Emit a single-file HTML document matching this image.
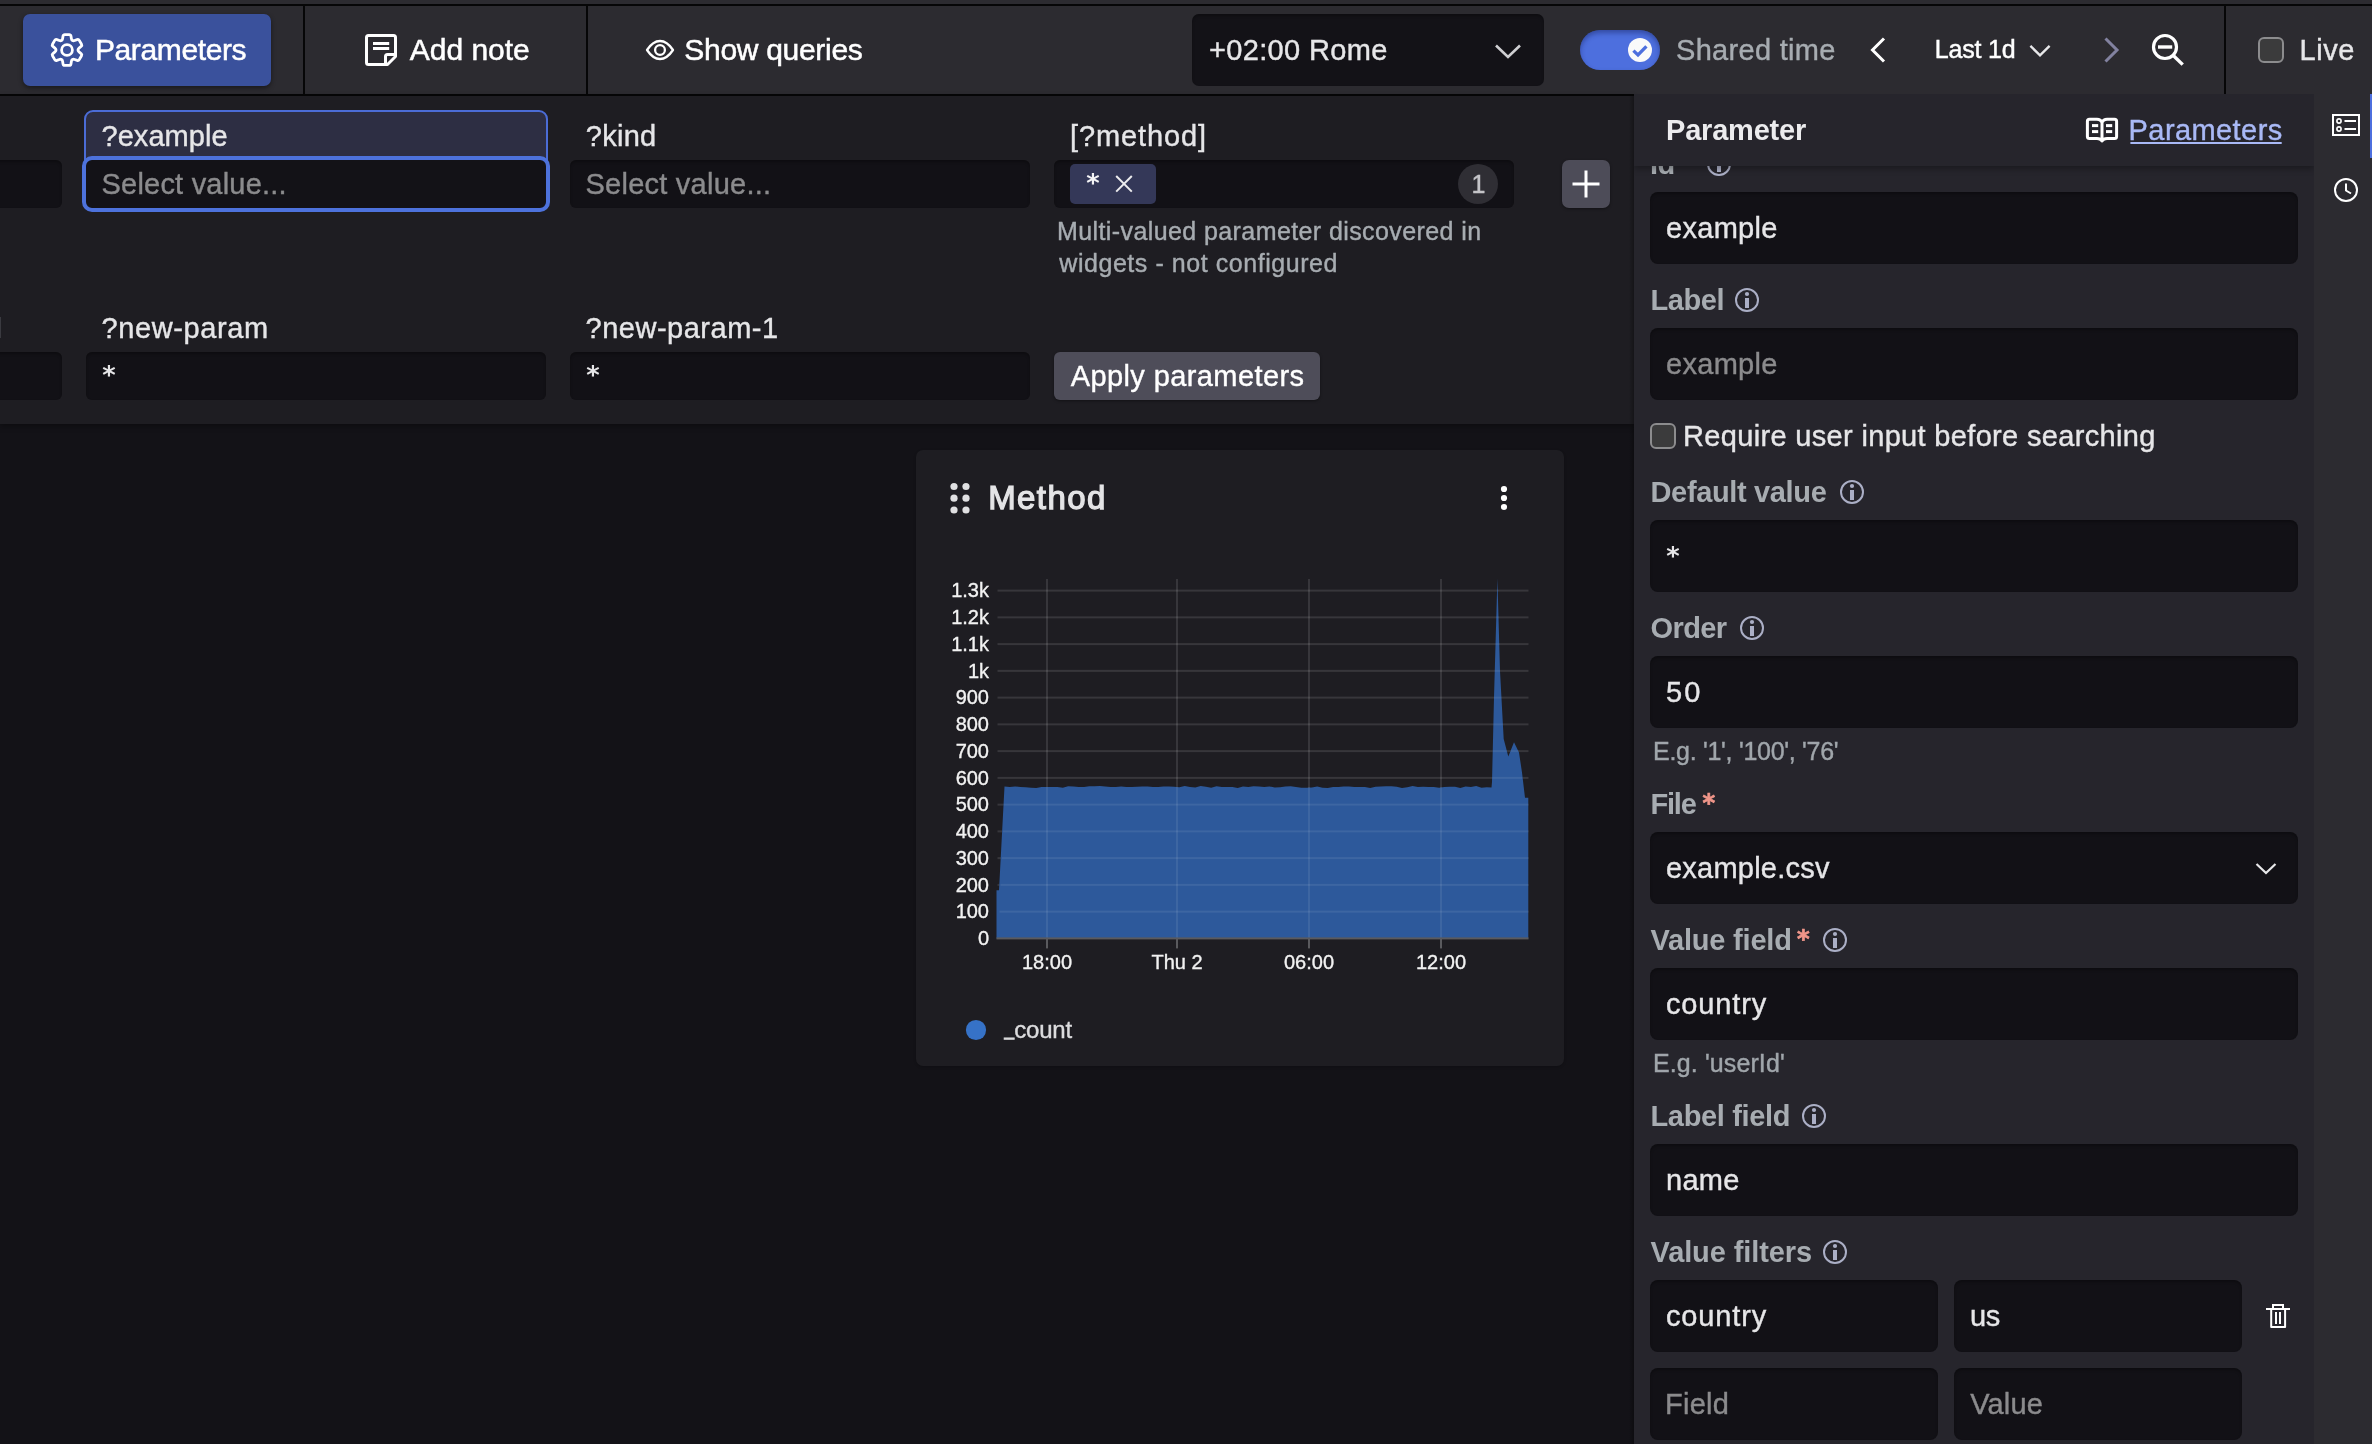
<!DOCTYPE html>
<html><head><meta charset="utf-8"><title>Dashboard</title>
<style>
html,body{margin:0;padding:0}
body{width:2372px;height:1444px;background:#131217;position:relative;overflow:hidden;font-family:"Liberation Sans", sans-serif;}
.b{position:absolute}
.t{position:absolute;white-space:pre;}
.tx{position:absolute;left:0;top:0;width:2372px;height:1444px;will-change:transform;}
svg.ov{position:absolute;left:0;top:0;will-change:transform}
.ax{font-family:"Liberation Sans", sans-serif;font-size:20px;fill:#f2f2f2;stroke:#f2f2f2;stroke-width:0.35px}
.hdr{position:absolute;left:1634px;top:94px;width:680px;height:72px;background:#26252c;box-shadow:0 3px 6px rgba(0,0,0,.3);clip-path:inset(0 0 -12px 0)}
</style></head><body>
<div class="b" style="left:0px;top:0px;width:2372px;height:6px;background:#2c2b30;border-radius:0px;"></div>
<div class="b" style="left:0px;top:4px;width:2372px;height:2px;background:#060607;border-radius:0px;"></div>
<div class="b" style="left:0px;top:6px;width:2372px;height:88px;background:#2c2b30;border-radius:0px;"></div>
<div class="b" style="left:0px;top:94px;width:1634px;height:2px;background:#060607;border-radius:0px;"></div>
<div class="b" style="left:0px;top:96px;width:1634px;height:328px;background:#1e1d22;border-radius:0px;box-shadow:0 2px 6px rgba(0,0,0,.35);"></div>
<div class="b" style="left:303px;top:6px;width:2px;height:88px;background:#060607;border-radius:0px;"></div>
<div class="b" style="left:586px;top:6px;width:2px;height:88px;background:#060607;border-radius:0px;"></div>
<div class="b" style="left:2224px;top:6px;width:2px;height:88px;background:#060607;border-radius:0px;"></div>
<div class="b" style="left:23px;top:14px;width:248px;height:72px;background:#3a519c;border-radius:7px;box-shadow:0 2px 5px rgba(0,0,0,.45);"></div>
<div class="b" style="left:1192px;top:14px;width:352px;height:72px;background:#131217;border-radius:7px;box-shadow:inset 0 2px 3px rgba(0,0,0,.28);"></div>
<div class="b" style="left:1580px;top:30px;width:80px;height:40px;background:#4d6fde;border-radius:20px;box-shadow:inset 0 3px 5px rgba(20,30,90,.45);"></div>
<div class="b" style="left:1628px;top:38px;width:24px;height:24px;background:#fafafa;border-radius:12px;"></div>
<div class="b" style="left:2258px;top:37px;width:26px;height:26px;background:#3b3b3c;border-radius:6px;box-sizing:border-box;border:2px solid #8c8c8e;"></div>
<div class="b" style="left:-10px;top:160px;width:72px;height:48px;background:#121116;border-radius:6px;box-shadow:inset 0 2px 3px rgba(0,0,0,.28);"></div>
<div class="b" style="left:84px;top:110px;width:464px;height:52px;background:#2d2e43;border-radius:9px;box-sizing:border-box;border:2px solid #4b6cd6;border-bottom-left-radius:0;border-bottom-right-radius:0;"></div>
<div class="b" style="left:82px;top:156px;width:468px;height:56px;background:#131217;border-radius:10px;box-sizing:border-box;border:4px solid #4d72dc;"></div>
<div class="b" style="left:570px;top:160px;width:460px;height:48px;background:#121116;border-radius:6px;box-shadow:inset 0 2px 3px rgba(0,0,0,.28);"></div>
<div class="b" style="left:1054px;top:160px;width:460px;height:48px;background:#121116;border-radius:6px;box-shadow:inset 0 2px 3px rgba(0,0,0,.28);"></div>
<div class="b" style="left:1070px;top:164px;width:86px;height:40px;background:#343858;border-radius:5px;"></div>
<div class="b" style="left:1458px;top:164px;width:40px;height:40px;background:#2f2e34;border-radius:20px;"></div>
<div class="b" style="left:1562px;top:160px;width:48px;height:48px;background:#4d4c58;border-radius:7px;box-shadow:0 1px 3px rgba(0,0,0,.4);"></div>
<div class="b" style="left:-10px;top:352px;width:72px;height:48px;background:#121116;border-radius:6px;box-shadow:inset 0 2px 3px rgba(0,0,0,.28);"></div>
<div class="b" style="left:86px;top:352px;width:460px;height:48px;background:#121116;border-radius:6px;box-shadow:inset 0 2px 3px rgba(0,0,0,.28);"></div>
<div class="b" style="left:570px;top:352px;width:460px;height:48px;background:#121116;border-radius:6px;box-shadow:inset 0 2px 3px rgba(0,0,0,.28);"></div>
<div class="b" style="left:1054px;top:352px;width:266px;height:48px;background:#4e4d59;border-radius:6px;box-shadow:0 1px 3px rgba(0,0,0,.4);"></div>
<div class="b" style="left:0px;top:317px;width:1px;height:21px;background:#3a3a40;border-radius:0px;"></div>
<div class="b" style="left:916px;top:450px;width:648px;height:616px;background:#1e1d22;border-radius:7px;box-shadow:0 1px 3px rgba(0,0,0,.2);"></div>
<div class="b" style="left:1629px;top:96px;width:5px;height:1348px;background:linear-gradient(to right,rgba(0,0,0,0),rgba(0,0,0,.3));border-radius:0px;"></div>
<div class="b" style="left:1634px;top:94px;width:680px;height:1350px;background:#26252c;border-radius:0px;"></div>
<div class="b" style="left:2314px;top:94px;width:58px;height:1350px;background:#2c2b30;border-radius:0px;"></div>
<div class="b" style="left:2370px;top:94px;width:2px;height:64px;background:#4d6fde;border-radius:0px;"></div>
<div class="b" style="left:1650px;top:192px;width:648px;height:72px;background:#121116;border-radius:8px;box-shadow:inset 0 2px 3px rgba(0,0,0,.28);"></div>
<div class="b" style="left:1650px;top:328px;width:648px;height:72px;background:#121116;border-radius:8px;box-shadow:inset 0 2px 3px rgba(0,0,0,.28);"></div>
<div class="b" style="left:1650px;top:520px;width:648px;height:72px;background:#121116;border-radius:8px;box-shadow:inset 0 2px 3px rgba(0,0,0,.28);"></div>
<div class="b" style="left:1650px;top:656px;width:648px;height:72px;background:#121116;border-radius:8px;box-shadow:inset 0 2px 3px rgba(0,0,0,.28);"></div>
<div class="b" style="left:1650px;top:832px;width:648px;height:72px;background:#121116;border-radius:8px;box-shadow:inset 0 2px 3px rgba(0,0,0,.28);"></div>
<div class="b" style="left:1650px;top:968px;width:648px;height:72px;background:#121116;border-radius:8px;box-shadow:inset 0 2px 3px rgba(0,0,0,.28);"></div>
<div class="b" style="left:1650px;top:1144px;width:648px;height:72px;background:#121116;border-radius:8px;box-shadow:inset 0 2px 3px rgba(0,0,0,.28);"></div>
<div class="b" style="left:1650px;top:1280px;width:288px;height:72px;background:#121116;border-radius:8px;box-shadow:inset 0 2px 3px rgba(0,0,0,.28);"></div>
<div class="b" style="left:1954px;top:1280px;width:288px;height:72px;background:#121116;border-radius:8px;box-shadow:inset 0 2px 3px rgba(0,0,0,.28);"></div>
<div class="b" style="left:1650px;top:1368px;width:288px;height:72px;background:#121116;border-radius:8px;box-shadow:inset 0 2px 3px rgba(0,0,0,.28);"></div>
<div class="b" style="left:1954px;top:1368px;width:288px;height:72px;background:#121116;border-radius:8px;box-shadow:inset 0 2px 3px rgba(0,0,0,.28);"></div>
<div class="b" style="left:1650px;top:423px;width:26px;height:26px;background:#3b3b3c;border-radius:6px;box-sizing:border-box;border:2px solid #8c8c8e;"></div>
<span class="t" style="left:1650.3px;top:150px;font-size:29px;line-height:29px;font-weight:700;color:#a7acb1;letter-spacing:-0.6px;will-change:transform">Id</span>
<svg class="ov" width="2372" height="1444" viewBox="0 0 2372 1444"><g><circle cx="1719" cy="164" r="11" fill="none" stroke="#abafc6" stroke-width="2"/><circle cx="1719" cy="158" r="2.1" fill="#abafc6"/><rect x="1717" y="162" width="4" height="10" fill="#abafc6"/></g></svg>
<div class="hdr"></div>
<svg class="ov" width="2372" height="1444" viewBox="0 0 2372 1444">
<path d="M61.52,40.51 Q62.35,40.03 62.59,38.65 L63.04,36.02 Q63.29,34.54 64.79,34.54 L69.21,34.54 Q70.71,34.54 70.96,36.02 L71.41,38.65 Q71.65,40.03 72.48,40.51 L72.48,40.51 Q73.31,40.99 74.62,40.50 L77.13,39.58 Q78.53,39.06 79.28,40.35 L81.50,44.19 Q82.25,45.48 81.09,46.44 L79.04,48.15 Q77.96,49.04 77.96,50.00 L77.96,50.00 Q77.96,50.96 79.04,51.85 L81.09,53.56 Q82.25,54.52 81.50,55.81 L79.28,59.65 Q78.53,60.94 77.13,60.42 L74.62,59.50 Q73.31,59.01 72.48,59.49 L72.48,59.49 Q71.65,59.97 71.41,61.35 L70.96,63.98 Q70.71,65.46 69.21,65.46 L64.79,65.46 Q63.29,65.46 63.04,63.98 L62.59,61.35 Q62.35,59.97 61.52,59.49 L61.52,59.49 Q60.69,59.01 59.38,59.50 L56.87,60.42 Q55.47,60.94 54.72,59.65 L52.50,55.81 Q51.75,54.52 52.91,53.56 L54.96,51.85 Q56.04,50.96 56.04,50.00 L56.04,50.00 Q56.04,49.04 54.96,48.15 L52.91,46.44 Q51.75,45.48 52.50,44.19 L54.72,40.35 Q55.47,39.06 56.87,39.58 L59.38,40.50 Q60.69,40.99 61.52,40.51Z" fill="none" stroke="#ffffff" stroke-width="2.8" stroke-linejoin="round"/>
<circle cx="67" cy="50" r="5.4" fill="none" stroke="#ffffff" stroke-width="2.8"/>
<path d="M368.5,35.5 H393.5 Q395.5,35.5 395.5,37.5 V56.5 L387.5,64.5 H368.5 Q366.5,64.5 366.5,62.5 V37.5 Q366.5,35.5 368.5,35.5 Z M385.5,64.5 V56.5 Q385.5,54.5 387.5,54.5 H395.5" fill="none" stroke="#ffffff" stroke-width="3" stroke-linejoin="round"/>
<rect x="373" y="42" width="16.2" height="3" fill="#ffffff"/><rect x="373" y="47" width="16.2" height="3" fill="#ffffff"/>
<path d="M647,50 C651,44 655,41 660,41 C665,41 669,44 673,50 C669,56 665,59 660,59 C655,59 651,56 647,50 Z" fill="none" stroke="#ffffff" stroke-width="2.3" stroke-linejoin="round"/>
<circle cx="660" cy="50" r="4.9" fill="none" stroke="#ffffff" stroke-width="2.3"/>
<path d="M1496,45.5 L1508,57 L1520,45.5" fill="none" stroke="#cfcfd2" stroke-width="2.6"/>
<path d="M1633.4,50.6 L1638,55 L1646.4,46.4" fill="none" stroke="#4d6fde" stroke-width="3.3"/>
<path d="M1884,38.5 L1872.5,50 L1884,61.5" fill="none" stroke="#ffffff" stroke-width="3"/>
<path d="M2030.4,45.9 L2040,55.3 L2049.6,45.9" fill="none" stroke="#e8e8ea" stroke-width="2.4"/>
<path d="M2105.5,38.5 L2117,50 L2105.5,61.5" fill="none" stroke="#8282a0" stroke-width="3"/>
<circle cx="2165" cy="47" r="11.5" fill="none" stroke="#ffffff" stroke-width="3.2"/><rect x="2158" y="45.3" width="14.2" height="3.4" fill="#ffffff"/><path d="M2173.3,55.5 L2182.7,64.6" stroke="#ffffff" stroke-width="3.4" fill="none"/>
<path d="M1116.2,176 L1131.8,191.6 M1131.8,176 L1116.2,191.6" stroke="#ececee" stroke-width="2" fill="none"/>
<path d="M1586,170.5 V197.5 M1572.5,184 H1599.5" stroke="#ffffff" stroke-width="3" fill="none"/>
<circle cx="954" cy="486.5" r="3.6" fill="#e0e0e2"/>
<circle cx="954" cy="498.2" r="3.6" fill="#e0e0e2"/>
<circle cx="954" cy="510" r="3.6" fill="#e0e0e2"/>
<circle cx="966" cy="486.5" r="3.6" fill="#e0e0e2"/>
<circle cx="966" cy="498.2" r="3.6" fill="#e0e0e2"/>
<circle cx="966" cy="510" r="3.6" fill="#e0e0e2"/>
<circle cx="1504" cy="489" r="3.1" fill="#ffffff"/>
<circle cx="1504" cy="498" r="3.1" fill="#ffffff"/>
<circle cx="1504" cy="507" r="3.1" fill="#ffffff"/>
<path d="M2102,122.5 Q2100.5,119.2 2097,119.2 H2089.5 Q2087.4,119.2 2087.4,121.2 V136.5 Q2087.4,138.5 2089.5,138.5 H2097 Q2100.5,138.5 2102,141 Q2103.5,138.5 2107,138.5 H2114.5 Q2116.6,138.5 2116.6,136.5 V121.2 Q2116.6,119.2 2114.5,119.2 H2107 Q2103.5,119.2 2102,122.5 V140.5" fill="none" stroke="#ffffff" stroke-width="3" stroke-linejoin="round"/>
<rect x="2092" y="124.1" width="6.2" height="3" fill="#ffffff"/>
<rect x="2092" y="130.1" width="6.2" height="3" fill="#ffffff"/>
<rect x="2106" y="124.1" width="6.2" height="3" fill="#ffffff"/>
<rect x="2106" y="130.1" width="6.2" height="3" fill="#ffffff"/>
<rect x="2130.4" y="142" width="151.3" height="2" fill="#a9b9f6"/>
<rect x="2333" y="115" width="26" height="20" fill="none" stroke="#ffffff" stroke-width="2"/>
<circle cx="2339" cy="121" r="2.1" fill="none" stroke="#ffffff" stroke-width="1.6"/><rect x="2344.5" y="120" width="11.5" height="2" fill="#ffffff"/>
<circle cx="2339" cy="129" r="2.1" fill="none" stroke="#ffffff" stroke-width="1.6"/><rect x="2344.5" y="128" width="11.5" height="2" fill="#ffffff"/>
<circle cx="2346" cy="190" r="11" fill="none" stroke="#ffffff" stroke-width="2"/><path d="M2346,183.5 V190.5 L2351,193.5" fill="none" stroke="#ffffff" stroke-width="2"/>
<g><circle cx="1747" cy="300" r="11" fill="none" stroke="#abafc6" stroke-width="2"/><circle cx="1747" cy="294" r="2.1" fill="#abafc6"/><rect x="1745" y="298" width="4" height="10" fill="#abafc6"/></g>
<g><circle cx="1852" cy="492" r="11" fill="none" stroke="#abafc6" stroke-width="2"/><circle cx="1852" cy="486" r="2.1" fill="#abafc6"/><rect x="1850" y="490" width="4" height="10" fill="#abafc6"/></g>
<g><circle cx="1752" cy="628" r="11" fill="none" stroke="#abafc6" stroke-width="2"/><circle cx="1752" cy="622" r="2.1" fill="#abafc6"/><rect x="1750" y="626" width="4" height="10" fill="#abafc6"/></g>
<g><circle cx="1835" cy="940" r="11" fill="none" stroke="#abafc6" stroke-width="2"/><circle cx="1835" cy="934" r="2.1" fill="#abafc6"/><rect x="1833" y="938" width="4" height="10" fill="#abafc6"/></g>
<g><circle cx="1814" cy="1116" r="11" fill="none" stroke="#abafc6" stroke-width="2"/><circle cx="1814" cy="1110" r="2.1" fill="#abafc6"/><rect x="1812" y="1114" width="4" height="10" fill="#abafc6"/></g>
<g><circle cx="1835" cy="1252" r="11" fill="none" stroke="#abafc6" stroke-width="2"/><circle cx="1835" cy="1246" r="2.1" fill="#abafc6"/><rect x="1833" y="1250" width="4" height="10" fill="#abafc6"/></g>
<path d="M2256.5,864 L2266,873 L2275.5,864" fill="none" stroke="#e8e8ea" stroke-width="2.2"/>
<rect x="2266" y="1308" width="24" height="2" fill="#ffffff"/><path d="M2273,1308 V1305 H2283 V1308" fill="none" stroke="#ffffff" stroke-width="2"/><path d="M2271.2,1310 V1327 H2285.1 V1310" fill="none" stroke="#ffffff" stroke-width="2" stroke-linejoin="round"/><rect x="2275" y="1312" width="2" height="12" fill="#ffffff"/><rect x="2279" y="1312" width="2" height="12" fill="#ffffff"/>
<rect x="997.5" y="910.65" width="531.0" height="2" fill="rgba(255,255,255,0.115)"/><rect x="997.5" y="883.89" width="531.0" height="2" fill="rgba(255,255,255,0.115)"/><rect x="997.5" y="857.14" width="531.0" height="2" fill="rgba(255,255,255,0.115)"/><rect x="997.5" y="830.38" width="531.0" height="2" fill="rgba(255,255,255,0.115)"/><rect x="997.5" y="803.63" width="531.0" height="2" fill="rgba(255,255,255,0.115)"/><rect x="997.5" y="776.88" width="531.0" height="2" fill="rgba(255,255,255,0.115)"/><rect x="997.5" y="750.12" width="531.0" height="2" fill="rgba(255,255,255,0.115)"/><rect x="997.5" y="723.37" width="531.0" height="2" fill="rgba(255,255,255,0.115)"/><rect x="997.5" y="696.61" width="531.0" height="2" fill="rgba(255,255,255,0.115)"/><rect x="997.5" y="669.86" width="531.0" height="2" fill="rgba(255,255,255,0.115)"/><rect x="997.5" y="643.11" width="531.0" height="2" fill="rgba(255,255,255,0.115)"/><rect x="997.5" y="616.35" width="531.0" height="2" fill="rgba(255,255,255,0.115)"/><rect x="997.5" y="589.60" width="531.0" height="2" fill="rgba(255,255,255,0.115)"/><rect x="1046" y="579" width="2" height="359.4" fill="rgba(255,255,255,0.115)"/><rect x="1176" y="579" width="2" height="359.4" fill="rgba(255,255,255,0.115)"/><rect x="1308" y="579" width="2" height="359.4" fill="rgba(255,255,255,0.115)"/><rect x="1440" y="579" width="2" height="359.4" fill="rgba(255,255,255,0.115)"/>
<path d="M996.5,890.2 L999.0,890.2 L1004.5,786.4 L1009.8,787.0 L1015.1,786.4 L1020.4,787.0 L1025.7,787.2 L1031.0,787.8 L1036.3,788.0 L1041.6,787.0 L1046.9,787.0 L1052.2,787.0 L1057.5,787.0 L1062.8,787.8 L1068.1,786.2 L1073.4,786.4 L1078.7,787.0 L1084.0,787.0 L1089.3,786.2 L1094.6,786.2 L1099.9,785.9 L1105.2,786.4 L1110.5,787.0 L1115.8,787.0 L1121.1,786.4 L1126.4,787.0 L1131.7,787.0 L1137.0,786.7 L1142.3,786.4 L1147.6,786.4 L1152.9,787.0 L1158.2,787.0 L1163.5,786.4 L1168.8,786.4 L1174.1,786.7 L1179.4,787.2 L1184.7,785.9 L1190.0,787.0 L1195.3,787.5 L1200.6,785.9 L1205.9,786.7 L1211.2,787.8 L1216.5,786.2 L1221.8,787.0 L1227.1,787.0 L1232.4,787.0 L1237.7,788.0 L1243.0,786.4 L1248.3,787.0 L1253.6,786.2 L1258.9,786.4 L1264.2,787.0 L1269.5,786.4 L1274.8,787.5 L1280.1,787.2 L1285.4,786.4 L1290.7,786.2 L1296.0,787.0 L1301.3,787.8 L1306.6,787.8 L1311.9,787.5 L1317.2,786.4 L1322.5,787.8 L1327.8,788.0 L1333.1,787.0 L1338.4,787.0 L1343.7,786.4 L1349.0,786.4 L1354.3,787.0 L1359.6,787.0 L1364.9,787.0 L1370.2,788.0 L1375.5,786.7 L1380.8,786.4 L1386.1,786.2 L1391.4,786.2 L1396.7,786.7 L1402.0,788.0 L1407.3,787.2 L1412.6,785.9 L1417.9,787.0 L1423.2,786.7 L1428.5,787.0 L1433.8,787.0 L1439.1,787.8 L1444.4,787.0 L1449.7,786.7 L1455.0,786.7 L1460.3,788.0 L1465.6,786.4 L1470.9,787.0 L1476.2,785.9 L1481.5,787.8 L1486.8,787.2 L1491.5,787.5 L1492.0,781.9 L1494.0,697.6 L1497.4,578.6 L1500.0,670.9 L1503.7,739.1 L1508.3,756.5 L1514.0,742.3 L1519.0,752.5 L1522.0,772.5 L1525.0,797.7 L1528.3,797.7 L1528.3,938.4 L996.5,938.4Z" fill="#2d599b"/>
<rect x="999.5" y="910.65" width="528.8" height="2" fill="rgba(255,255,255,0.08)"/>
<rect x="1000.5" y="883.89" width="527.8" height="2" fill="rgba(255,255,255,0.08)"/>
<rect x="1001.8" y="857.14" width="526.5" height="2" fill="rgba(255,255,255,0.08)"/>
<rect x="1002.8" y="830.38" width="525.5" height="2" fill="rgba(255,255,255,0.08)"/>
<rect x="1003.8" y="803.63" width="524.5" height="2" fill="rgba(255,255,255,0.08)"/>
<rect x="1492.2" y="776.88" width="30.1" height="2" fill="rgba(255,255,255,0.08)"/>
<rect x="1493.4" y="723.37" width="9.5" height="2" fill="rgba(255,255,255,0.08)"/>
<rect x="1494" y="696.61" width="7.5" height="2" fill="rgba(255,255,255,0.08)"/>
<rect x="1494.8" y="669.86" width="5.2" height="2" fill="rgba(255,255,255,0.08)"/>
<rect x="1495.5" y="643.11" width="3.9" height="2" fill="rgba(255,255,255,0.08)"/>
<rect x="1496.3" y="616.35" width="2.5" height="2" fill="rgba(255,255,255,0.08)"/>
<rect x="1497.1" y="589.60" width="1.2" height="2" fill="rgba(255,255,255,0.08)"/>
<rect x="1493" y="750.12" width="13.8" height="2" fill="rgba(255,255,255,0.08)"/>
<rect x="1511" y="750.12" width="7.4" height="2" fill="rgba(255,255,255,0.08)"/>
<rect x="1046" y="787.0" width="2" height="151.4" fill="rgba(255,255,255,0.08)"/>
<rect x="1176" y="787.0" width="2" height="151.4" fill="rgba(255,255,255,0.08)"/>
<rect x="1308" y="787.0" width="2" height="151.4" fill="rgba(255,255,255,0.08)"/>
<rect x="1440" y="787.0" width="2" height="151.4" fill="rgba(255,255,255,0.08)"/>
<rect x="996.5" y="937.4" width="532.0" height="2" fill="#5a5a5e"/>
<rect x="1046" y="938.4" width="2" height="10" fill="#5a5a5e"/>
<rect x="1176" y="938.4" width="2" height="10" fill="#5a5a5e"/>
<rect x="1308" y="938.4" width="2" height="10" fill="#5a5a5e"/>
<rect x="1440" y="938.4" width="2" height="10" fill="#5a5a5e"/>
<text x="989" y="945.0" text-anchor="end" class="ax">0</text>
<text x="989" y="918.2" text-anchor="end" class="ax">100</text>
<text x="989" y="891.5" text-anchor="end" class="ax">200</text>
<text x="989" y="864.7" text-anchor="end" class="ax">300</text>
<text x="989" y="838.0" text-anchor="end" class="ax">400</text>
<text x="989" y="811.2" text-anchor="end" class="ax">500</text>
<text x="989" y="784.5" text-anchor="end" class="ax">600</text>
<text x="989" y="757.7" text-anchor="end" class="ax">700</text>
<text x="989" y="731.0" text-anchor="end" class="ax">800</text>
<text x="989" y="704.2" text-anchor="end" class="ax">900</text>
<text x="989" y="677.5" text-anchor="end" class="ax">1k</text>
<text x="989" y="650.7" text-anchor="end" class="ax">1.1k</text>
<text x="989" y="624.0" text-anchor="end" class="ax">1.2k</text>
<text x="989" y="597.2" text-anchor="end" class="ax">1.3k</text>
<text x="1047" y="969.3" text-anchor="middle" class="ax">18:00</text>
<text x="1177" y="969.3" text-anchor="middle" class="ax">Thu 2</text>
<text x="1309" y="969.3" text-anchor="middle" class="ax">06:00</text>
<text x="1441" y="969.3" text-anchor="middle" class="ax">12:00</text>
<circle cx="976" cy="1030" r="10.1" fill="#3672c7"/>
</svg>
<div class="tx">
<span class="t" style="left:94.90px;top:35.00px;font-size:30px;line-height:30px;color:#ffffff;letter-spacing:-0.373px;-webkit-text-stroke:0.5px #ffffff;">Parameters</span>
<span class="t" style="left:409.80px;top:35.00px;font-size:30px;line-height:30px;color:#ffffff;letter-spacing:-0.031px;-webkit-text-stroke:0.5px #ffffff;">Add note</span>
<span class="t" style="left:684.30px;top:35.00px;font-size:30px;line-height:30px;color:#ffffff;letter-spacing:-0.297px;-webkit-text-stroke:0.5px #ffffff;">Show queries</span>
<span class="t" style="left:1209.00px;top:36.00px;font-size:29px;line-height:29px;color:#e6e6e8;letter-spacing:0.341px;-webkit-text-stroke:0.4px #e6e6e8;">+02:00 Rome</span>
<span class="t" style="left:1676.00px;top:36.00px;font-size:29px;line-height:29px;color:#a7acb1;letter-spacing:0.307px;-webkit-text-stroke:0.4px #a7acb1;">Shared time</span>
<span class="t" style="left:1934.80px;top:37.00px;font-size:25px;line-height:25px;color:#ffffff;letter-spacing:-0.184px;-webkit-text-stroke:0.45px #ffffff;">Last 1d</span>
<span class="t" style="left:2299.50px;top:36.00px;font-size:29px;line-height:29px;color:#e6e6e8;letter-spacing:0.576px;-webkit-text-stroke:0.4px #e6e6e8;">Live</span>
<span class="t" style="left:101.50px;top:122.00px;font-size:29px;line-height:29px;color:#e6e6e8;letter-spacing:0.041px;-webkit-text-stroke:0.4px #e6e6e8;">?example</span>
<span class="t" style="left:101.50px;top:170.00px;font-size:29px;line-height:29px;color:#8b8b8d;letter-spacing:0.214px;-webkit-text-stroke:0.4px #8b8b8d;">Select value...</span>
<span class="t" style="left:585.80px;top:122.00px;font-size:29px;line-height:29px;color:#e6e6e8;letter-spacing:0.275px;-webkit-text-stroke:0.4px #e6e6e8;">?kind</span>
<span class="t" style="left:585.50px;top:170.00px;font-size:29px;line-height:29px;color:#8b8b8d;letter-spacing:0.243px;-webkit-text-stroke:0.4px #8b8b8d;">Select value...</span>
<span class="t" style="left:1070.00px;top:122.00px;font-size:29px;line-height:29px;color:#e6e6e8;letter-spacing:0.886px;-webkit-text-stroke:0.4px #e6e6e8;">[?method]</span>
<span class="t" style="left:1471.50px;top:172.00px;font-size:25px;line-height:25px;color:#c4c4c8;letter-spacing:0.000px;-webkit-text-stroke:0.4px #c4c4c8;">1</span>
<span class="t" style="left:1057.00px;top:219.00px;font-size:25px;line-height:25px;color:#a7acb1;letter-spacing:0.405px;-webkit-text-stroke:0.4px #a7acb1;">Multi-valued parameter discovered in</span>
<span class="t" style="left:1059.30px;top:251.00px;font-size:25px;line-height:25px;color:#a7acb1;letter-spacing:0.551px;-webkit-text-stroke:0.4px #a7acb1;">widgets - not configured</span>
<span class="t" style="left:101.40px;top:314.00px;font-size:29px;line-height:29px;color:#e6e6e8;letter-spacing:0.619px;-webkit-text-stroke:0.4px #e6e6e8;">?new-param</span>
<span class="t" style="left:585.60px;top:314.00px;font-size:29px;line-height:29px;color:#e6e6e8;letter-spacing:0.505px;-webkit-text-stroke:0.4px #e6e6e8;">?new-param-1</span>
<span class="t" style="left:1070.70px;top:362.00px;font-size:29px;line-height:29px;color:#ffffff;letter-spacing:0.402px;-webkit-text-stroke:0.4px #ffffff;">Apply parameters</span>
<span class="t" style="left:988.20px;top:481.00px;font-size:33px;line-height:33px;color:#e4e4e6;letter-spacing:1.417px;-webkit-text-stroke:1.25px #e4e4e6;">Method</span>
<span class="t" style="left:1014.30px;top:1018.00px;font-size:24px;line-height:24px;color:#dcdcde;letter-spacing:-0.236px;-webkit-text-stroke:0.4px #dcdcde;">count</span>
<span class="t" style="left:1004.40px;top:1022.00px;font-size:17px;line-height:17px;color:#dcdcde;letter-spacing:0.000px;-webkit-text-stroke:1.0px #dcdcde;">_</span>
<span class="t" style="left:1666.00px;top:116.00px;font-size:29px;line-height:29px;color:#ececee;letter-spacing:-0.198px;font-weight:700;">Parameter</span>
<span class="t" style="left:2128.60px;top:116.00px;font-size:29px;line-height:29px;color:#a9b9f6;letter-spacing:0.413px;-webkit-text-stroke:0.4px #a9b9f6;">Parameters</span>
<span class="t" style="left:1666.00px;top:214.00px;font-size:29px;line-height:29px;color:#e6e6e8;letter-spacing:0.302px;-webkit-text-stroke:0.4px #e6e6e8;">example</span>
<span class="t" style="left:1650.50px;top:286.00px;font-size:29px;line-height:29px;color:#a7acb1;letter-spacing:-0.446px;font-weight:700;">Label</span>
<span class="t" style="left:1666.00px;top:350.00px;font-size:29px;line-height:29px;color:#8b8b8d;letter-spacing:0.302px;-webkit-text-stroke:0.4px #8b8b8d;">example</span>
<span class="t" style="left:1683.00px;top:422.00px;font-size:29px;line-height:29px;color:#e6e6e8;letter-spacing:0.332px;-webkit-text-stroke:0.4px #e6e6e8;">Require user input before searching</span>
<span class="t" style="left:1650.50px;top:478.00px;font-size:29px;line-height:29px;color:#a7acb1;letter-spacing:-0.348px;font-weight:700;">Default value</span>
<span class="t" style="left:1650.50px;top:614.00px;font-size:29px;line-height:29px;color:#a7acb1;letter-spacing:-0.596px;font-weight:700;">Order</span>
<span class="t" style="left:1666.00px;top:678.00px;font-size:29px;line-height:29px;color:#e6e6e8;letter-spacing:2.172px;-webkit-text-stroke:0.4px #e6e6e8;">50</span>
<span class="t" style="left:1653.00px;top:739.00px;font-size:25px;line-height:25px;color:#a0a6ab;letter-spacing:-0.284px;-webkit-text-stroke:0.4px #a0a6ab;">E.g. '1', '100', '76'</span>
<span class="t" style="left:1650.50px;top:790.00px;font-size:29px;line-height:29px;color:#a7acb1;letter-spacing:-1.210px;font-weight:700;">File</span>
<span class="t" style="left:1666.00px;top:854.00px;font-size:29px;line-height:29px;color:#e6e6e8;letter-spacing:0.223px;-webkit-text-stroke:0.4px #e6e6e8;">example.csv</span>
<span class="t" style="left:1650.50px;top:926.00px;font-size:29px;line-height:29px;color:#a7acb1;letter-spacing:-0.203px;font-weight:700;">Value field</span>
<span class="t" style="left:1666.00px;top:990.00px;font-size:29px;line-height:29px;color:#e6e6e8;letter-spacing:0.867px;-webkit-text-stroke:0.4px #e6e6e8;">country</span>
<span class="t" style="left:1653.00px;top:1051.00px;font-size:25px;line-height:25px;color:#a0a6ab;letter-spacing:0.102px;-webkit-text-stroke:0.4px #a0a6ab;">E.g. 'userId'</span>
<span class="t" style="left:1650.50px;top:1102.00px;font-size:29px;line-height:29px;color:#a7acb1;letter-spacing:-0.350px;font-weight:700;">Label field</span>
<span class="t" style="left:1666.00px;top:1166.00px;font-size:29px;line-height:29px;color:#e6e6e8;letter-spacing:0.295px;-webkit-text-stroke:0.4px #e6e6e8;">name</span>
<span class="t" style="left:1650.50px;top:1238.00px;font-size:29px;line-height:29px;color:#a7acb1;letter-spacing:-0.106px;font-weight:700;">Value filters</span>
<span class="t" style="left:1666.00px;top:1302.00px;font-size:29px;line-height:29px;color:#e6e6e8;letter-spacing:0.867px;-webkit-text-stroke:0.4px #e6e6e8;">country</span>
<span class="t" style="left:1970.00px;top:1302.00px;font-size:29px;line-height:29px;color:#e6e6e8;letter-spacing:-0.328px;-webkit-text-stroke:0.4px #e6e6e8;">us</span>
<span class="t" style="left:1665.00px;top:1390.00px;font-size:29px;line-height:29px;color:#8b8b8d;letter-spacing:0.268px;-webkit-text-stroke:0.4px #8b8b8d;">Field</span>
<span class="t" style="left:1970.30px;top:1390.00px;font-size:29px;line-height:29px;color:#8b8b8d;letter-spacing:0.127px;-webkit-text-stroke:0.4px #8b8b8d;">Value</span>
<span class="t" style="font-family:'DejaVu Sans',sans-serif;font-weight:bold;left:102.21px;top:361.82px;font-size:25.63px;line-height:25.63px;color:#e6e6e8;">*</span>
<span class="t" style="font-family:'DejaVu Sans',sans-serif;font-weight:bold;left:586.21px;top:361.82px;font-size:25.63px;line-height:25.63px;color:#e6e6e8;">*</span>
<span class="t" style="font-family:'DejaVu Sans',sans-serif;font-weight:bold;left:1086.21px;top:169.82px;font-size:25.63px;line-height:25.63px;color:#f4f4f6;">*</span>
<span class="t" style="font-family:'DejaVu Sans',sans-serif;font-weight:bold;left:1666.21px;top:542.72px;font-size:25.63px;line-height:25.63px;color:#e6e6e8;">*</span>
<span class="t" style="font-family:'DejaVu Sans',sans-serif;font-weight:bold;left:1702.60px;top:791.10px;font-size:24.17px;line-height:24.17px;color:#f0968a;-webkit-text-stroke:0.7px #f0968a;">*</span>
<span class="t" style="font-family:'DejaVu Sans',sans-serif;font-weight:bold;left:1797.10px;top:926.90px;font-size:24.17px;line-height:24.17px;color:#f0968a;-webkit-text-stroke:0.7px #f0968a;">*</span>
</div>
</body></html>
